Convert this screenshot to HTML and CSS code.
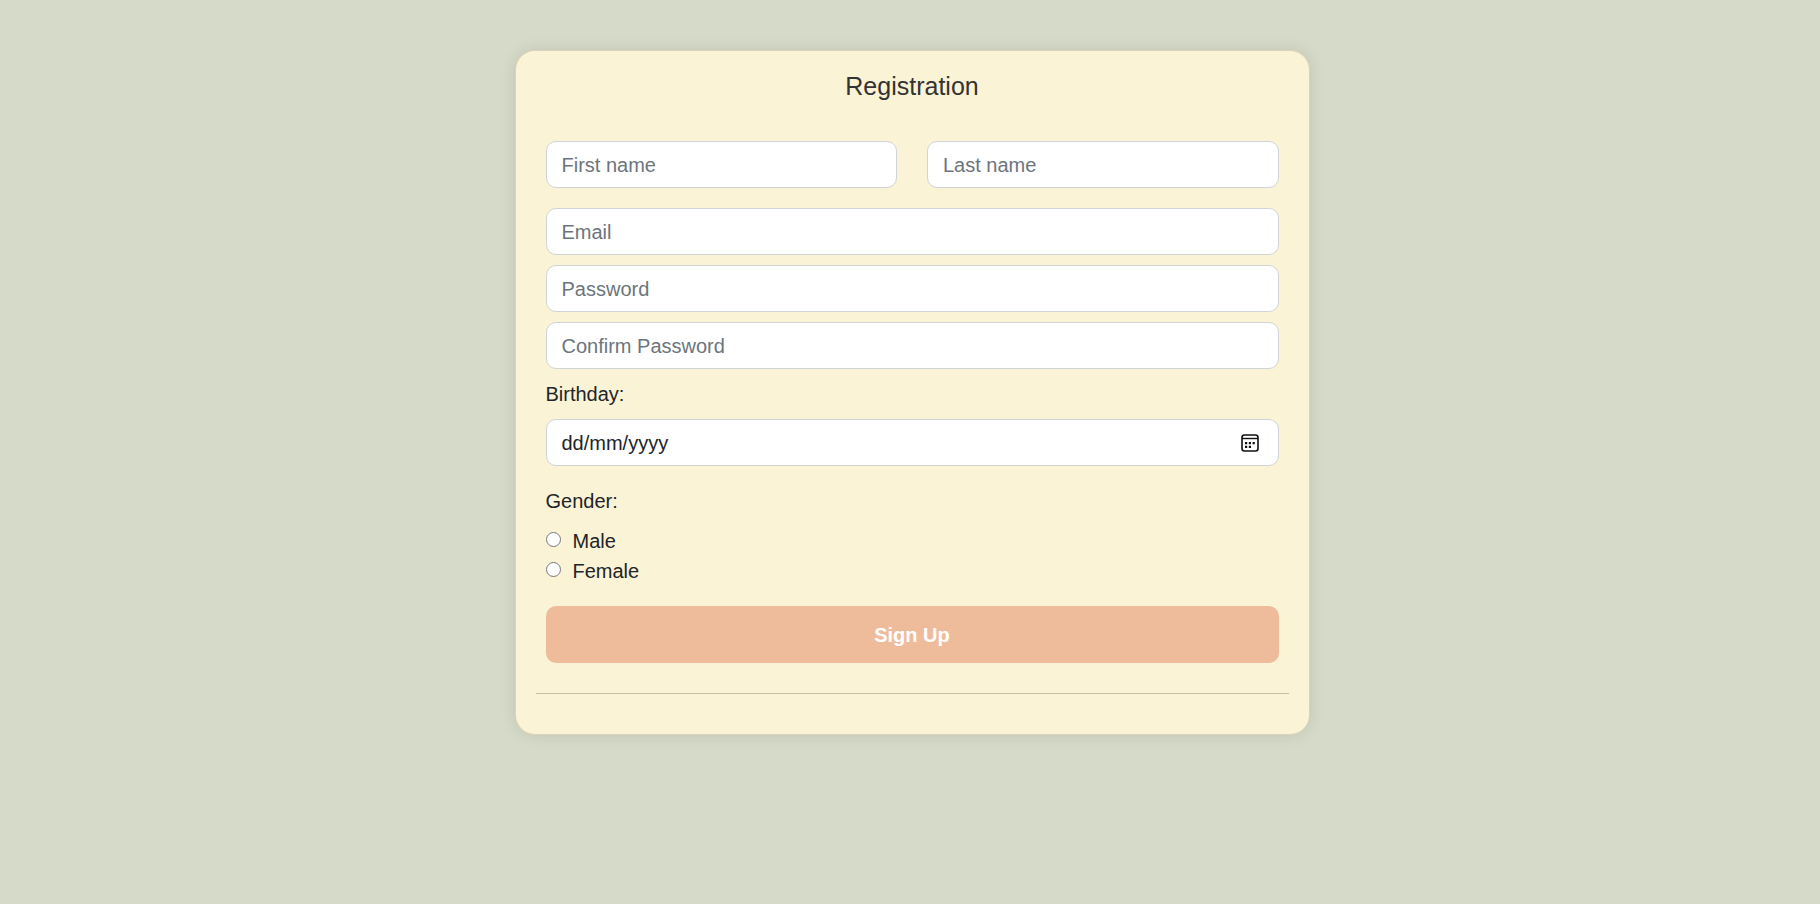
FILE: index.html
```html
<!DOCTYPE html>
<html lang="en">
<head>
  <meta charset="utf-8">
  <meta name="viewport" content="width=device-width, initial-scale=1">
  <title>Registration</title>
  <link rel="stylesheet" href="styles.css">
</head>
<body>
  <main class="page">
    <section class="card">
      <h1 class="card-title">Registration</h1>
      <form class="form">
        <div class="name-row">
          <input class="field" type="text" name="first" placeholder="First name" aria-label="First name">
          <input class="field" type="text" name="last" placeholder="Last name" aria-label="Last name">
        </div>
        <div class="stack">
          <input class="field" type="email" name="email" placeholder="Email" aria-label="Email">
          <input class="field" type="password" name="password" placeholder="Password" aria-label="Password">
          <input class="field" type="password" name="confirm" placeholder="Confirm Password" aria-label="Confirm Password">
        </div>
        <label class="label" for="birthday">Birthday:</label>
        <div class="field date-field">
          <input class="date-input" id="birthday" type="text" name="birthday" placeholder="dd/mm/yyyy">
          <button class="date-button" type="button" aria-label="Open calendar">
            <svg class="date-icon" viewBox="0 0 18 18" aria-hidden="true">
              <rect x="1" y="1" width="16" height="16" rx="2.5" fill="none" stroke="currentColor" stroke-width="1.6"/>
              <path d="M1 4.5h16" stroke="currentColor" stroke-width="1.4"/>
              <path d="M4 8h2.2v2.2H4zM7.8 8H10v2.2H7.8zM11.6 8h2.2v2.2h-2.2zM4 11.7h2.2v2.2H4zM7.8 11.7H10v2.2H7.8z" fill="currentColor"/>
            </svg>
          </button>
        </div>
        <fieldset class="gender">
          <legend class="legend">Gender:</legend>
          <div class="option">
            <input class="radio" type="radio" name="gender" id="male">
            <label for="male">Male</label>
          </div>
          <div class="option">
            <input class="radio" type="radio" name="gender" id="female">
            <label for="female">Female</label>
          </div>
        </fieldset>
        <button class="submit" type="submit">Sign Up</button>
      </form>
      <hr class="divider">
    </section>
  </main>
</body>
</html>
```
FILE: styles.css
```css
*,
*::before,
*::after {
  box-sizing: border-box;
}

body {
  margin: 0;
  background: #d6dac8;
  color: #212529;
  font-family: "Liberation Sans", Arial, sans-serif;
  font-size: 20px;
  line-height: 30px;
}

.page {
  display: flex;
  justify-content: center;
  padding: 50px 0 50px 4px;
}

.card {
  width: 100%;
  max-width: 795px;
  padding: 20px 20px 40px;
  background: #fbf3d5;
  border: 1px solid rgba(0, 0, 0, 0.125);
  border-radius: 20px;
  box-shadow: 0 0 16px rgba(0, 0, 0, 0.1);
}

.card-title {
  margin: 0 0 40px;
  color: #333;
  font-size: 25px;
  font-weight: 400;
  line-height: 30px;
  text-align: center;
}

.form {
  padding: 0 10px;
}

.name-row {
  display: grid;
  grid-template-columns: 1fr 1fr;
  gap: 30px;
  margin-bottom: 20px;
}

.stack {
  display: flex;
  flex-direction: column;
  gap: 10px;
}

.field {
  width: 100%;
  min-width: 0;
  height: 47px;
  padding: 2px 15px 0;
  background: #fff;
  border: 1px solid #ced4da;
  border-radius: 10px;
  color: #212529;
  font: inherit;
}

.field::placeholder {
  color: #6c757d;
  opacity: 1;
}

.label {
  display: block;
  margin: 10px 0;
}

.date-field {
  display: flex;
  align-items: center;
  padding: 0 19px 0 15px;
}

.date-input {
  flex: 1;
  min-width: 0;
  padding: 0;
  background: none;
  border: 0;
  color: inherit;
  font: inherit;
}

.date-input::placeholder {
  color: #212529;
  opacity: 1;
}

.date-button {
  display: flex;
  padding: 0;
  background: none;
  border: 0;
  color: #111;
}

.date-icon {
  width: 18px;
  height: 18px;
}

.gender {
  margin: 20px 0;
  padding: 0;
  border: 0;
}

.legend {
  margin-bottom: 10px;
  padding: 0;
}

.option {
  display: flex;
  align-items: flex-start;
  gap: 12px;
}

.radio {
  width: 15px;
  height: 15px;
  margin: 6px 0 0;
}

.submit {
  width: 100%;
  height: 57px;
  background: #efbc9b;
  border: 0;
  border-radius: 10px;
  color: #fff;
  font: inherit;
  font-weight: 700;
}

.divider {
  margin: 30px 0 0;
  border: 0;
  border-top: 1px solid #c3beaa;
}
```
